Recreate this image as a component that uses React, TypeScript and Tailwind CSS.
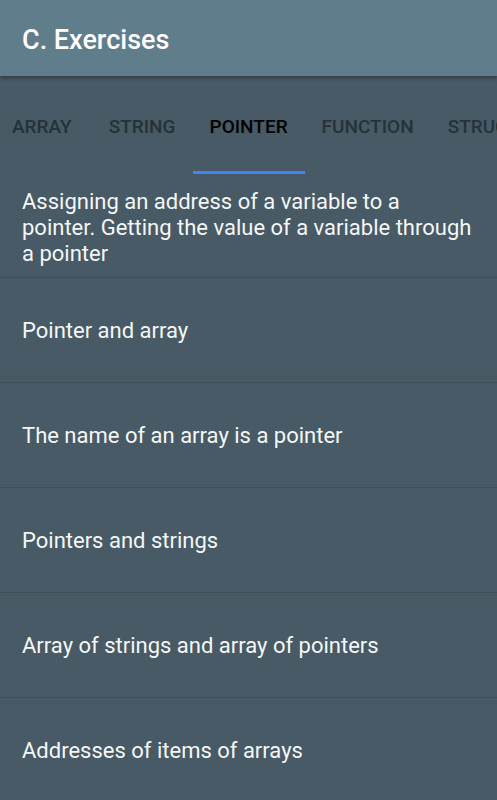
import React from "react";

const tabs = ["ARRAY", "STRING", "POINTER", "FUNCTION", "STRUCTURE"];
const items = [
  "Assigning an address of a variable to a pointer. Getting the value of a variable through a pointer",
  "Pointer and array",
  "The name of an array is a pointer",
  "Pointers and strings",
  "Array of strings and array of pointers",
  "Addresses of items of arrays",
];

const App = () => {
  return (
    <div
      className="w-[497px] h-[800px] overflow-hidden bg-[#475a65] flex flex-col"
      style={{ fontFamily: "Roboto, 'Noto Sans', sans-serif" }}
    >
      {/* header */}
      <div className="h-[76px] shrink-0 bg-[#607d8b] flex items-center px-[22px] pt-[4px] shadow-[0_2px_4px_rgba(0,0,0,0.35)] relative z-10">
        <h1 className="text-[27px] font-medium text-white leading-none">C. Exercises</h1>
      </div>

      {/* tabs */}
      <div className="h-[98px] shrink-0 flex items-stretch overflow-hidden -ml-[5px]">
        {tabs.map((t, i) => {
          const active = t === "POINTER";
          return (
            <div
              key={t}
              className={`shrink-0 flex flex-col justify-end ${i === 0 ? "pl-[17px] pr-[20px]" : "px-[17px]"}`}
            >
              <div
                className={`text-[19px] font-medium leading-none pb-[35px] ${active ? "text-black" : "text-[#263238]"}`}
              >
                {t}
              </div>
              <div className={`h-[3px] -mx-[17px] ${active ? "bg-[#4285f4]" : "bg-transparent"}`} />
            </div>
          );
        })}
      </div>

      {/* list */}
      <div className="flex flex-col">
        {items.map((it, i) => (
          <div
            key={i}
            className={`border-b border-[#3e505a] px-[22px] flex items-center text-[22px] text-[#f5f7f8] leading-[26px] ${i === 0 ? "h-[104px] pt-[4px]" : "h-[105px] pt-[2px]"}`}
          >
            {it}
          </div>
        ))}
      </div>
    </div>
  );
};

export default App;
